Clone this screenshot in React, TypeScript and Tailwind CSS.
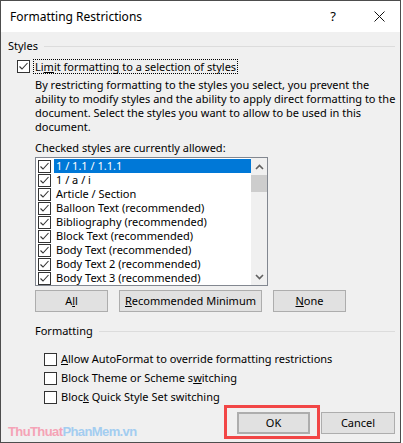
import type { ReactNode } from "react";

const styles = [
  "1 / 1.1 / 1.1.1",
  "1 / a / i",
  "Article / Section",
  "Balloon Text (recommended)",
  "Bibliography (recommended)",
  "Block Text (recommended)",
  "Body Text (recommended)",
  "Body Text 2 (recommended)",
  "Body Text 3 (recommended)",
];

function Check({ checked }: { checked?: boolean }) {
  return (
    <span className="flex h-[13px] w-[13px] shrink-0 items-center justify-center border border-[#333333] bg-white">
      {checked && (
        <svg width="11" height="11" viewBox="0 0 11 11">
          <polyline points="1.5,5.5 4,8 9.5,2" fill="none" stroke="#333333" strokeWidth="1.1" />
        </svg>
      )}
    </span>
  );
}

function Btn({ children, className = "" }: { children: ReactNode; className?: string }) {
  return (
    <div
      className={`flex h-[22px] items-center justify-center border border-[#adadad] bg-[#e1e1e1] text-[11px] text-black ${className}`}
    >
      {children}
    </div>
  );
}

function GroupLabel({ text }: { text: string }) {
  return (
    <div className="flex h-[14px] items-center gap-[6px]">
      <span className="leading-[14px]">{text}</span>
      <span className="h-px flex-1 bg-[#dcdcdc]" />
    </div>
  );
}

export default function App() {
  return (
    <div className="h-[443px] w-[403px] bg-white" style={{ fontFamily: '"Noto Sans", "Open Sans", sans-serif' }}>
      <div className="flex h-[443px] w-[401px] flex-col border border-[#4d4d4d] text-[11px] text-black">
        {/* title bar */}
        <div className="flex h-[31px] shrink-0 items-center bg-white pl-[9px] pr-[15px]">
          <span className="text-[12px]">Formatting Restrictions</span>
          <span className="ml-auto mr-[38px] text-[13px]">?</span>
          <svg width="11" height="11" viewBox="0 0 11 11">
            <path d="M0.5 0.5 L10.5 10.5 M10.5 0.5 L0.5 10.5" stroke="#111" strokeWidth="1" />
          </svg>
        </div>

        {/* body */}
        <div className="relative flex flex-1 flex-col bg-[#f0f0f0] pl-[7px] pr-[5px] pt-[7px]">
          <GroupLabel text="Styles" />

          <div className="ml-[9px] mt-[6px] flex h-[15px] items-center gap-[3px]">
            <Check checked />
            <span className="border border-dotted border-black px-px leading-[13px]">
              Li<u>m</u>it formatting to a selection of styles
            </span>
          </div>

          <p className="ml-[27px] mt-[4px] whitespace-nowrap leading-[14px]">
            By restricting formatting to the styles you select, you prevent the
            <br />
            ability to modify styles and the ability to apply direct formatting to the
            <br />
            document. Select the styles you want to allow to be used in this
            <br />
            document.
          </p>

          <div className="ml-[27px] mt-[7px] leading-[14px]">Checked styles are currently allowed:</div>

          {/* list box */}
          <div className="ml-[27px] mt-[2px] flex h-[129px] w-[233px] border border-[#828790] bg-white">
            <div className="flex flex-1 flex-col pt-px">
              {styles.map((s, i) => (
                <div key={s} className="flex h-[14px] items-center">
                  <span className="ml-[2px] mr-[3px]">
                    <Check checked />
                  </span>
                  <span
                    className={`flex h-[14px] flex-1 items-center pl-[2px] ${
                      i === 0 ? "bg-[#0078d7] text-white" : ""
                    }`}
                  >
                    {s}
                  </span>
                </div>
              ))}
            </div>
            <div className="flex w-[16px] flex-col bg-[#f0f0f0]">
              <div className="flex h-[17px] items-center justify-center">
                <svg width="9" height="6" viewBox="0 0 9 6">
                  <polyline points="1,5 4.5,1.5 8,5" fill="none" stroke="#606060" strokeWidth="1.6" />
                </svg>
              </div>
              <div className="h-[17px] bg-[#cdcdcd]" />
              <div className="flex-1" />
              <div className="flex h-[17px] items-center justify-center">
                <svg width="9" height="6" viewBox="0 0 9 6">
                  <polyline points="1,1 4.5,4.5 8,1" fill="none" stroke="#606060" strokeWidth="1.6" />
                </svg>
              </div>
            </div>
          </div>

          {/* select buttons */}
          <div className="ml-[27px] mt-[4px] flex gap-[11px]">
            <Btn className="w-[73px]">
              A<u>l</u>l
            </Btn>
            <Btn className="w-[143px]">
              <u>R</u>ecommended Minimum
            </Btn>
            <Btn className="w-[73px]">
              <u>N</u>one
            </Btn>
          </div>

          <div className="ml-[27px] mt-[12px]">
            <GroupLabel text="Formatting" />
          </div>

          <div className="ml-[36px] mt-[12px] flex flex-col">
            <div className="flex h-[19px] items-center gap-[4px]">
              <Check />
              <span>
                <u>A</u>llow AutoFormat to override formatting restrictions
              </span>
            </div>
            <div className="flex h-[19px] items-center gap-[4px]">
              <Check />
              <span>
                Block Theme or Scheme s<u>w</u>itching
              </span>
            </div>
            <div className="flex h-[19px] items-center gap-[4px]">
              <Check />
              <span>
                Bloc<u>k</u> Quick Style Set switching
              </span>
            </div>
          </div>

          {/* footer */}
          <div className="mt-auto flex items-end justify-between pb-[8px]">
            <div
              className="mb-[-8px] pb-[1px] text-[13px] font-bold tracking-[-0.6px]"
              style={{ fontFamily: '"Liberation Sans", Arial, sans-serif' }}
            >
              <span className="text-[#f5a3b6]">ThuThuat</span>
              <span className="text-[#a3cdf0]">PhanMem.vn</span>
            </div>
            <div className="flex gap-[11px]">
              <div className="relative">
                <div className="pointer-events-none absolute -bottom-[5px] -left-[13px] -right-[10px] -top-[7px] border-[3px] border-[#f24646]" />
                <Btn className="w-[73px] border-2 border-[#0078d7]">OK</Btn>
              </div>
              <Btn className="w-[74px]">Cancel</Btn>
            </div>
          </div>
        </div>
      </div>
    </div>
  );
}
